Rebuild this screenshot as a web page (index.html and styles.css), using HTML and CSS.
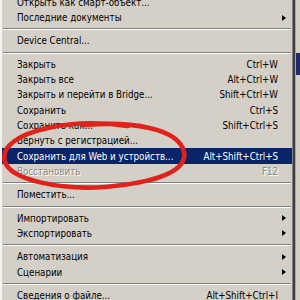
FILE: index.html
```html
<!DOCTYPE html>
<html lang="ru">
<head>
    <meta charset="UTF-8">
    <title>Файл</title>
    <link rel="stylesheet" href="styles.css">
</head>
<body>
    <div class="screen">
        <div class="menu">
            <div class="menu-list">
                <div class="item"><span class="label">Открыть как смарт-объект...</span></div>
                <div class="item"><span class="label">Последние документы</span><span class="arrow"></span></div>
                <div class="sep"></div>
                <div class="item"><span class="label">Device Central...</span></div>
                <div class="sep"></div>
                <div class="item"><span class="label">Закрыть</span><span class="key">Ctrl+W</span></div>
                <div class="item"><span class="label">Закрыть все</span><span class="key">Alt+Ctrl+W</span></div>
                <div class="item"><span class="label">Закрыть и перейти в Bridge...</span><span class="key">Shift+Ctrl+W</span></div>
                <div class="item"><span class="label">Сохранить</span><span class="key">Ctrl+S</span></div>
                <div class="item"><span class="label">Сохранить как...</span><span class="key">Shift+Ctrl+S</span></div>
                <div class="item"><span class="label">Вернуть с регистрацией...</span></div>
                <div class="item active"><span class="label">Сохранить для Web и устройств...</span><span class="key">Alt+Shift+Ctrl+S</span></div>
                <div class="item disabled"><span class="label">Восстановить</span><span class="key">F12</span></div>
                <div class="sep"></div>
                <div class="item"><span class="label">Поместить...</span></div>
                <div class="sep"></div>
                <div class="item"><span class="label">Импортировать</span><span class="arrow"></span></div>
                <div class="item"><span class="label">Экспортировать</span><span class="arrow"></span></div>
                <div class="sep"></div>
                <div class="item"><span class="label">Автоматизация</span><span class="arrow"></span></div>
                <div class="item"><span class="label">Сценарии</span><span class="arrow"></span></div>
                <div class="sep"></div>
                <div class="item"><span class="label">Сведения о файле...</span><span class="key">Alt+Shift+Ctrl+I</span></div>
            </div>
        </div>
        <div class="side">
            <div class="side-tab"></div>
        </div>
    </div>

    <!-- red hand-drawn mark around the item -->
    <svg class="mark" width="300" height="300" viewBox="0 0 300 300">
        <path d="M 84 125 C 130 121, 179 128, 184 152 C 188 173, 150 183, 105 187 C 60 190, 11 180, 5 162 C 0 146, 20 134, 48 128 C 70 123, 100 122, 128 126"
              fill="none" stroke="#e0221b" stroke-width="4.6" stroke-linecap="round"/>
    </svg>
</body>
</html>
```

FILE: styles.css
```css
* {
    margin: 0;
    padding: 0;
    box-sizing: border-box;
}

body {
    width: 300px;
    height: 300px;
    overflow: hidden;
    background-color: #d4d0c8;
    font-family: 'DejaVu Sans Condensed', 'Liberation Sans', sans-serif;
    font-size: 9.7px;
    color: #000;
}

.screen {
    display: flex;
    height: 300px;
}

.menu {
    width: 295px;
    height: 300px;
    overflow: hidden;
    background-color: #d4d0c8;
    border-left: 2px solid #f4f3ef;
    border-right: 2px solid #404040;
    box-shadow: inset -1px 0 0 #808080;
}

.menu-list {
    margin-top: -5.4px;
    padding-right: 1px;
}

.item {
    display: flex;
    align-items: center;
    height: 15.3px;
    padding-left: 15px;
    white-space: nowrap;
}

.item .label {
    flex: 1;
}

.item .key {
    padding-right: 14px;
}

.arrow {
    width: 0;
    height: 0;
    margin-right: 6px;
    border-left: 4px solid #000;
    border-top: 3.5px solid transparent;
    border-bottom: 3.5px solid transparent;
}

.item.active {
    background-color: #0a246a;
    color: #fff;
}

.item.disabled {
    color: #8c8a84;
    text-shadow: 1px 1px 0 #fff;
}

.sep {
    height: 8.1px;
    display: flex;
    flex-direction: column;
    justify-content: center;
    padding: 0 1px;
}

.sep::before {
    content: '';
    display: block;
    border-top: 1px solid #808080;
    border-bottom: 1px solid #fff;
}

.side {
    flex: 1;
    background-color: #d4d0c8;
    border-left: 1px solid #a8a49c;
    padding-top: 53px;
}

.side-tab {
    height: 22px;
    background-color: #1c2c6c;
}

.mark {
    position: absolute;
    top: 0;
    left: 0;
    pointer-events: none;
}
```
